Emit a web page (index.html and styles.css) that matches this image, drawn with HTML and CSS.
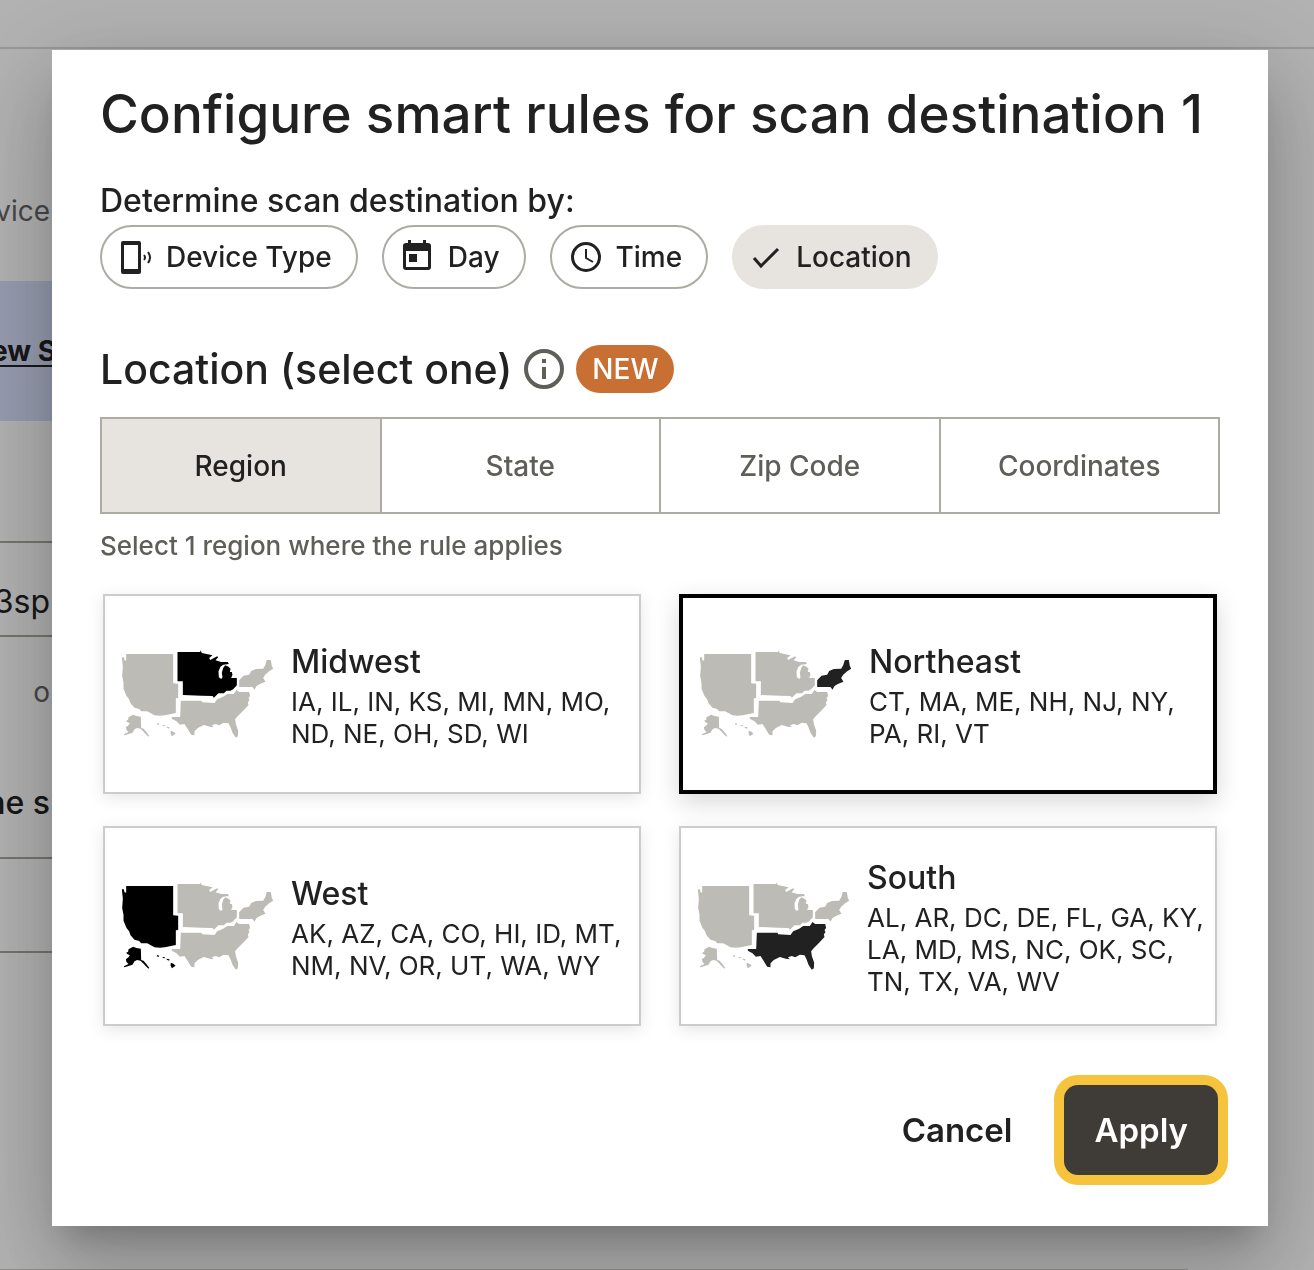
FILE: index.html
```html
<!DOCTYPE html>
<html lang="en">
<head>
    <meta charset="UTF-8">
    <meta name="viewport" content="width=device-width, initial-scale=1.0">
    <title>Configure smart rules</title>
    <link rel="stylesheet" href="styles.css">
</head>
<body>
    <!-- Region shapes, shared by all the cards -->
    <svg class="sprite" aria-hidden="true">
        <symbol id="west" viewBox="35 30 456 264">
            <path d="M36 52h6l2 9 5 1V42h141v88l15 1v43l-7 1v44l-33 7-15 1-16-1-22-12H94l-6-7-14-4-12-13-4-12-8-10-9-22v-18l-4-20 2-28z"/>
            <path d="M49 242l6-3 1-7 14-8 10 4 13 2 1 34 7 2 8 9 9 12-2 3-8-7-6-7-10-10-10-2-8 4-6 10-24 8-2-3 14-7-6-6-2-8 8-6 4-6-8-4z"/>
            <path d="M142 249l6 2-2 4-5-2zM158 255l7 1v3l-6-1zM170 260l9 2-1 4-7-3zM183 272l9 4 5 5-11 8-4-9z"/>
        </symbol>
        <symbol id="midwest" viewBox="35 30 456 264">
            <path d="M203 36h68l1-5 4 8 32 7-10 8 3 6 21-11 3 3-8 9 17 5h20l3 6-17 2-8 6-6 14 1 18 7 5 4-5-2-14 4-14 6-8 10 4 6 6-2 10 6 0 2 8-4 10h17v22l-11 12-8 4h-12l-8 8h-16l-14 13-4-5-32-1-57-2v-41h-16z"/>
        </symbol>
        <symbol id="northeast" viewBox="35 30 456 264">
            <path d="M388 121l13-14 17-3 6-11 14-6 22-1 6-10 5-16h12l3 18 4 8-12 8-12 10-6 10 7 11-17 7-10 6-6 11-6-8h-40z"/>
        </symbol>
        <symbol id="south" viewBox="35 30 456 264">
            <path d="M213 182h62l2 5 37 2 8-11 18-8 12-8h20l8-12 8 6h30l3 12-5 6 3 7-5 6 2 8-16 17-18 18-6 8 2 14 7 20-1 17-6 4-10-15-6-16-6-12-14-2-14 8-10-4-12 4 6 6-12-2-18-5-18 9-10 10v12l-10-2-10-16-10-16-14 2-10-10-14-8v-5h25z"/>
        </symbol>
    </svg>

    <div class="page">
        <header class="page-header"></header>
        <main class="page-main">
            <p class="page-row row-device">vice</p>
            <p class="page-row row-banner"><a href="#">ew S</a></p>
            <p class="page-row row-blank"></p>
            <p class="page-row row-url">3sp</p>
            <p class="page-row row-or">o</p>
            <p class="page-row row-name">ne s</p>
            <p class="page-row row-empty"></p>
        </main>
    </div>

    <div class="backdrop">
        <div class="dialog" role="dialog" aria-modal="true" aria-labelledby="dialog-title">
            <h1 id="dialog-title">Configure smart rules for scan destination 1</h1>

            <h2 class="chips-label">Determine scan destination by:</h2>
            <div class="chips">
                <button class="chip" type="button">
                    <svg width="34" height="34" viewBox="0 0 34 34" aria-hidden="true">
                        <path fill-rule="evenodd" d="M5 1h16a2 2 0 0 1 2 2v29a2 2 0 0 1-2 2H5a2 2 0 0 1-2-2V3a2 2 0 0 1 2-2zm1 4v24h14V5z"/>
                        <path class="line" d="M26 15q2 2.500 0 5M30 12q4 5.500 0 11"/>
                    </svg>
                    Device Type
                </button>
                <button class="chip" type="button">
                    <svg width="34" height="34" viewBox="0 0 34 34" aria-hidden="true">
                        <path fill-rule="evenodd" d="M8 0h3v3h12V0h3v3h2a3 3 0 0 1 3 3v21a3 3 0 0 1-3 3H6a3 3 0 0 1-3-3V6a3 3 0 0 1 3-3h2zM6 11v16h22V11z"/>
                        <path d="M9 14h8v8H9z"/>
                    </svg>
                    Day
                </button>
                <button class="chip" type="button">
                    <svg width="34" height="34" viewBox="0 0 34 34" aria-hidden="true">
                        <circle class="line thick" cx="18" cy="17" r="13.500"/>
                        <path class="line" d="M18 9v9l7 4"/>
                    </svg>
                    Time
                </button>
                <button class="chip selected" type="button" aria-pressed="true">
                    <svg width="34" height="34" viewBox="0 0 34 34" aria-hidden="true">
                        <path class="line thick" d="M4 18l7 8L28 9"/>
                    </svg>
                    Location
                </button>
            </div>

            <div class="section-title">
                <h2>Location (select one)</h2>
                <button class="info-btn" type="button" aria-label="About location rules">
                    <svg width="40" height="40" viewBox="0 0 40 40" aria-hidden="true">
                        <circle class="ring" cx="20" cy="20" r="18"/>
                        <path d="M18 10h4v4h-4zM18 18h4v12h-4z"/>
                    </svg>
                </button>
                <span class="badge">NEW</span>
            </div>

            <div class="tabs" role="tablist">
                <button class="tab active" type="button" role="tab" aria-selected="true">Region</button>
                <button class="tab" type="button" role="tab">State</button>
                <button class="tab" type="button" role="tab">Zip Code</button>
                <button class="tab" type="button" role="tab">Coordinates</button>
            </div>

            <p class="helper">Select 1 region where the rule applies</p>

            <div class="regions">
                <label class="region">
                    <input type="radio" name="region" value="midwest">
                    <svg class="map" viewBox="0 0 456 264" aria-hidden="true">
                        <use href="#west"/><use href="#midwest" class="black"/><use href="#northeast"/><use href="#south"/>
                    </svg>
                    <span class="region-text">
                        <span class="region-name">Midwest</span>
                        <span class="region-states">IA, IL, IN, KS, MI, MN, MO, ND, NE, OH, SD, WI</span>
                    </span>
                </label>
                <label class="region">
                    <input type="radio" name="region" value="northeast" checked>
                    <svg class="map" viewBox="0 0 456 264" aria-hidden="true">
                        <use href="#west"/><use href="#midwest"/><use href="#northeast" class="dark"/><use href="#south"/>
                    </svg>
                    <span class="region-text">
                        <span class="region-name">Northeast</span>
                        <span class="region-states">CT, MA, ME, NH, NJ, NY, PA, RI, VT</span>
                    </span>
                </label>
                <label class="region">
                    <input type="radio" name="region" value="west">
                    <svg class="map" viewBox="0 0 456 264" aria-hidden="true">
                        <use href="#west" class="black"/><use href="#midwest"/><use href="#northeast"/><use href="#south"/>
                    </svg>
                    <span class="region-text">
                        <span class="region-name">West</span>
                        <span class="region-states">AK, AZ, CA, CO, HI, ID, MT, NM, NV, OR, UT, WA, WY</span>
                    </span>
                </label>
                <label class="region">
                    <input type="radio" name="region" value="south">
                    <svg class="map" viewBox="0 0 456 264" aria-hidden="true">
                        <use href="#west"/><use href="#midwest"/><use href="#northeast"/><use href="#south" class="dark"/>
                    </svg>
                    <span class="region-text">
                        <span class="region-name">South</span>
                        <span class="region-states">AL, AR, DC, DE, FL, GA, KY, LA, MD, MS, NC, OK, SC, TN, TX, VA, WV</span>
                    </span>
                </label>
            </div>

            <div class="actions">
                <button class="cancel-btn" type="button">Cancel</button>
                <button class="apply-btn" type="button">Apply</button>
            </div>
        </div>
    </div>
</body>
</html>
```
FILE: styles.css
```css
* {
    box-sizing: border-box;
}

body {
    margin: 0;
    font-family: Inter, "Liberation Sans", sans-serif;
    color: #212121;
    background-color: #fff;
}

h1, h2, p {
    margin: 0;
    font-weight: 500;
}

button {
    font: inherit;
    color: inherit;
    background: none;
    border: none;
    padding: 0;
    cursor: pointer;
}

.sprite {
    display: none;
}

/* Page behind the dialog */
.page {
    height: 100vh;
    overflow: hidden;
}

.page-header {
    height: 49px;
    border-bottom: 2px solid #dad9d4;
}

.page-main {
    margin-right: 126px;
    min-height: calc(100vh - 49px);
    border-bottom: 1px solid #d0d0cc;
}

/* Only the end of each row shows beside the dialog */
.page-row {
    display: flex;
    align-items: center;
    justify-content: flex-end;
    padding-right: calc(100% - 50px);
    font-size: 32px;
    font-weight: 400;
    white-space: nowrap;
}

.row-device {
    height: 232px;
    padding-top: 92px;
    font-size: 28px;
    color: #666;
}

.row-banner {
    height: 140px;
    padding-right: calc(100% - 56px);
    background-color: #d8e0fc;
    font-size: 28px;
    font-weight: 700;
}

.row-banner a {
    color: inherit;
    text-underline-offset: 4px;
}

.row-blank,
.row-url,
.row-name,
.row-empty {
    border-bottom: 2px solid #a8a79f;
}

.row-blank {
    height: 122px;
}

.row-url {
    height: 94px;
    padding-top: 24px;
}

.row-or {
    height: 110px;
    font-size: 28px;
    color: #666;
}

.row-name {
    height: 112px;
    font-weight: 500;
}

.row-empty {
    height: 94px;
}

/* Dialog */
.backdrop {
    position: fixed;
    inset: 0;
    display: flex;
    align-items: flex-start;
    padding: 50px 46px 44px 52px;
    background-color: rgba(0, 0, 0, 0.3);
    overflow: hidden;
}

.dialog {
    flex: 1;
    padding: 32px 48px 51px;
    background-color: #fff;
    box-shadow:
        0 22px 30px -14px rgba(0, 0, 0, 0.2),
        0 48px 76px 6px rgba(0, 0, 0, 0.14),
        0 18px 92px 16px rgba(0, 0, 0, 0.12);
}

.dialog h1 {
    font-size: 53px;
    line-height: 64px;
    white-space: nowrap;
}

.chips-label {
    margin-top: 35px;
    font-size: 32px;
    line-height: 40px;
}

.chips {
    display: flex;
    gap: 24px;
    margin-top: 4px;
}

.chip {
    display: flex;
    align-items: center;
    gap: 14px;
    height: 64px;
    padding: 0 24px 0 16px;
    border: 2px solid #aeaba4;
    border-radius: 32px;
    font-size: 28px;
    font-weight: 500;
}

.chip svg {
    fill: currentColor;
}

.chip .line {
    fill: none;
    stroke: currentColor;
    stroke-width: 2;
}

.chip .thick {
    stroke-width: 3;
}

.chip.selected {
    gap: 12px;
    background-color: #e7e4df;
    border-color: #e7e4df;
}

.section-title {
    display: flex;
    align-items: center;
    gap: 12px;
    margin-top: 56px;
}

.section-title h2 {
    font-size: 41px;
    line-height: 48px;
}

.info-btn {
    height: 40px;
    color: #5f5e59;
}

.info-btn svg {
    display: block;
    fill: currentColor;
}

.info-btn .ring {
    fill: none;
    stroke: currentColor;
    stroke-width: 4;
}

.badge {
    padding: 0 16px;
    border-radius: 24px;
    background-color: #c86f33;
    color: #fff;
    font-size: 28px;
    font-weight: 500;
    line-height: 48px;
}

.tabs {
    display: flex;
    margin-top: 24px;
    border: 2px solid #aeaba4;
}

.tab {
    flex: 1;
    height: 93px;
    color: #5f5e59;
    font-size: 28px;
    font-weight: 500;
}

.tab + .tab {
    border-left: 2px solid #aeaba4;
}

.tab.active {
    background-color: #e7e4df;
    color: #212121;
}

.helper {
    margin-top: 16px;
    color: #5f5e59;
    font-size: 26px;
    line-height: 32px;
}

.regions {
    display: grid;
    grid-template-columns: 1fr 1fr;
    gap: 32px 38px;
    margin: 32px 3px 0;
}

.region {
    display: flex;
    align-items: center;
    min-height: 200px;
    padding: 0 8px 0 16px;
    border: 2px solid #ccc;
    box-shadow: 0 4px 16px rgba(0, 0, 0, 0.1);
    cursor: pointer;
}

.region input {
    appearance: none;
    width: 0;
    height: 0;
    margin: 0;
}

.region:has(input:checked) {
    border: 4px solid #000;
    box-shadow: 0 8px 24px rgba(0, 0, 0, 0.16);
}

.map {
    flex: none;
    width: 153px;
    height: 88px;
    fill: #bcbbb5;
}

.map .black {
    fill: #000;
}

.map .dark {
    fill: #212121;
}

.region-text {
    margin-left: 17px;
}

.region-name,
.region-states {
    display: block;
}

.region-name {
    font-size: 32px;
    font-weight: 500;
    line-height: 48px;
}

.region-states {
    font-size: 26px;
    line-height: 32px;
}

.actions {
    display: flex;
    justify-content: flex-end;
    gap: 52px;
    margin: 59px 2px 0 0;
    font-size: 33px;
}

.cancel-btn,
.apply-btn {
    font-weight: 600;
}

.apply-btn {
    padding: 0 30px;
    height: 90px;
    border-radius: 14px;
    background-color: #3f3b37;
    box-shadow: 0 0 0 10px #f5c43c;
    color: #fff;
}
```
